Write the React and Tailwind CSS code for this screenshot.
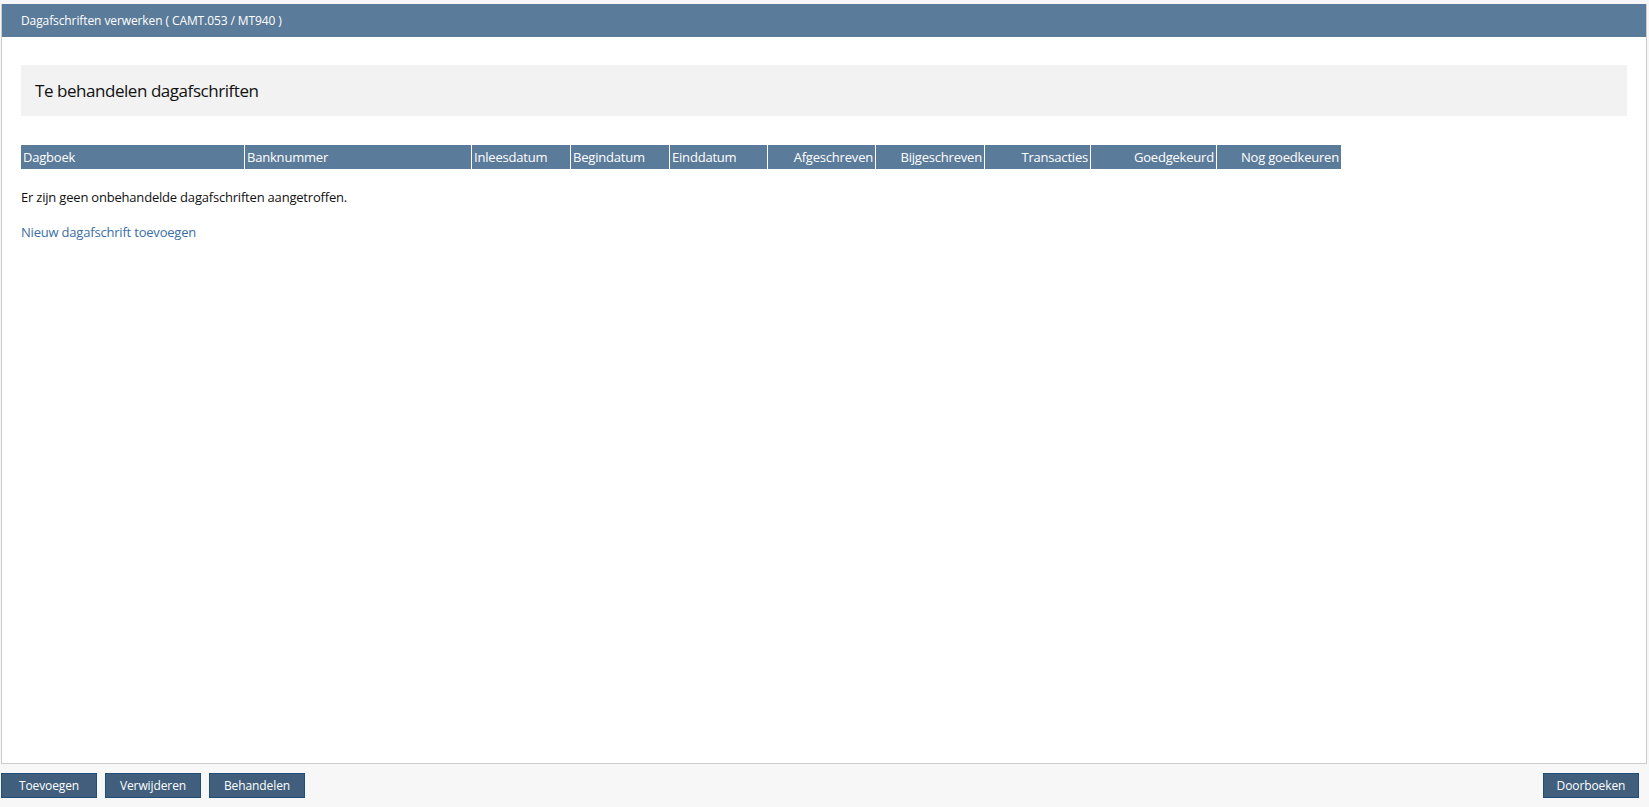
const columns = [
  { label: "Dagboek", width: "w-[223px]", align: "text-left" },
  { label: "Banknummer", width: "w-[227px]", align: "text-left" },
  { label: "Inleesdatum", width: "w-[99px]", align: "text-left" },
  { label: "Begindatum", width: "w-[99px]", align: "text-left" },
  { label: "Einddatum", width: "w-[98px]", align: "text-left" },
  { label: "Afgeschreven", width: "w-[108px]", align: "text-right" },
  { label: "Bijgeschreven", width: "w-[109px]", align: "text-right" },
  { label: "Transacties", width: "w-[106px]", align: "text-right" },
  { label: "Goedgekeurd", width: "w-[126px]", align: "text-right" },
  { label: "Nog goedkeuren", width: "w-[125px]", align: "text-right" },
];

const Button = ({ children }) => (
  <button className="h-[25px] w-[96px] border border-[#1f4e79] bg-[#415f7c] text-[12px] tracking-[-0.1px] text-white">
    {children}
  </button>
);

export default function App() {
  return (
    <div className="flex h-[807px] flex-col bg-[#f7f7f7] pt-1 font-['Open_Sans',sans-serif] text-[#111]">
      <div className="ml-px mr-[2px] flex flex-1 flex-col border border-[#cccccc] border-t-0 bg-white">
        <div className="flex h-[33px] items-center bg-[#5b7b9a] px-[19px] text-[12px] tracking-[-0.1px] text-white">
          Dagafschriften verwerken ( CAMT.053 / MT940 )
        </div>

        <div className="px-[19px]">
          <div className="mt-[28px] flex h-[51px] items-center bg-[#f2f2f2] pl-[14px] text-[17px] tracking-[-0.45px]">
            Te behandelen dagafschriften
          </div>

          <div className="mt-[29px] flex">
            {columns.map((col, i) => (
              <div
                key={col.label}
                className={`${col.width} ${col.align} ${i > 0 ? "border-l border-white" : ""} h-[24px] bg-[#5b7b9a] px-[2px] text-[13px] leading-[24px] tracking-[-0.2px] text-white`}
              >
                {col.label}
              </div>
            ))}
          </div>

          <p className="mt-[19px] text-[13px] tracking-[-0.2px]">Er zijn geen onbehandelde dagafschriften aangetroffen.</p>
          <p className="mt-[15px] text-[13px] tracking-[-0.2px] text-[#3a6ea5]">Nieuw dagafschrift toevoegen</p>
        </div>
      </div>

      <div className="flex h-[43px] items-start justify-between pl-px pr-[10px] pt-[9px]">
        <div className="flex gap-2">
          <Button>Toevoegen</Button>
          <Button>Verwijderen</Button>
          <Button>Behandelen</Button>
        </div>
        <Button>Doorboeken</Button>
      </div>
    </div>
  );
}
